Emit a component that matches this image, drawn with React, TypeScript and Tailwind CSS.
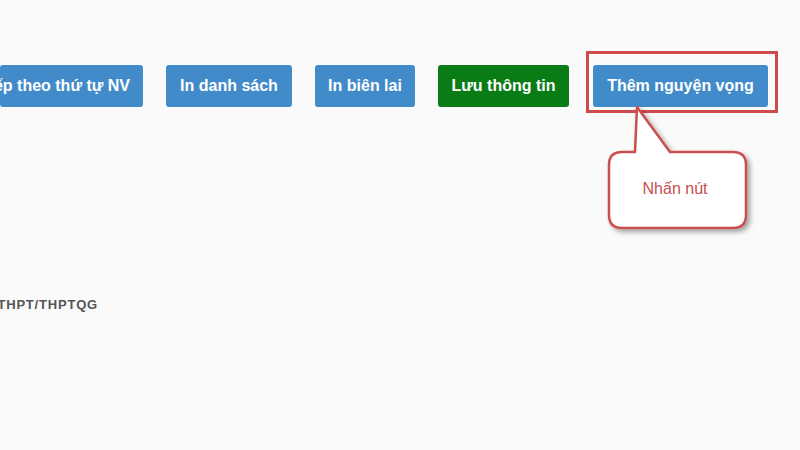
export default function App() {
  return (
    <div
      className="relative h-[450px] w-[800px] overflow-hidden bg-[#fafafa]"
      style={{ fontFamily: '"Liberation Sans", Arial, sans-serif' }}
    >
      {/* Action buttons */}
      <div className="flex gap-[23px] pt-[65px]">
        <button className="flex h-[42px] w-[143px] shrink-0 items-center justify-end rounded-[3px] bg-[#428bca] pr-[13px] text-[16px] font-bold whitespace-nowrap text-white">
          <span>Sắp xếp theo thứ tự NV</span>
        </button>
        <button className="h-[42px] w-[126px] shrink-0 rounded-[3px] bg-[#428bca] text-[16px] font-bold text-white">
          In danh sách
        </button>
        <button className="h-[42px] w-[100px] shrink-0 rounded-[3px] bg-[#428bca] text-[16px] font-bold text-white">
          In biên lai
        </button>
        <button className="h-[42px] w-[131px] shrink-0 rounded-[3px] bg-[#0a7c16] text-[16px] font-bold text-white">
          Lưu thông tin
        </button>
        <button className="ml-[1px] h-[42px] w-[175px] shrink-0 rounded-[3px] bg-[#428bca] text-[16px] font-bold text-white">
          Thêm nguyện vọng
        </button>
      </div>

      {/* Section label */}
      <div className="mt-[188px] flex w-[98px] justify-end">
        <span className="shrink-0 text-[13px] font-bold tracking-[0.8px] whitespace-nowrap text-[#555]">
          Điểm thi THPT/THPTQG
        </span>
      </div>

      {/* Highlight box */}
      <div className="absolute left-[586px] top-[51px] h-[62px] w-[192px] border-[3px] border-[#cf4a4a]" />

      {/* Callout */}
      <svg
        className="absolute left-[600px] top-[100px]"
        width="160"
        height="140"
        viewBox="0 0 160 140"
      >
        <defs>
          <filter id="sh" x="-20%" y="-20%" width="140%" height="140%">
            <feDropShadow dx="3" dy="3" stdDeviation="2.5" floodColor="#000" floodOpacity="0.35" />
          </filter>
        </defs>
        <path
          d="M37 7 L70 52 L133 52 Q146 52 146 65 L146 115 Q146 128 133 128 L22 128 Q9 128 9 115 L9 65 Q9 52 22 52 L35 52 Z"
          fill="#ffffff"
          stroke="#c9504f"
          strokeWidth="2.5"
          strokeLinejoin="round"
          filter="url(#sh)"
        />
        <text
          x="75"
          y="94"
          textAnchor="middle"
          fontSize="16"
          fill="#c4504d"
          fontFamily='"Liberation Sans", Arial, sans-serif'
        >
          Nhấn nút
        </text>
      </svg>
    </div>
  );
}
